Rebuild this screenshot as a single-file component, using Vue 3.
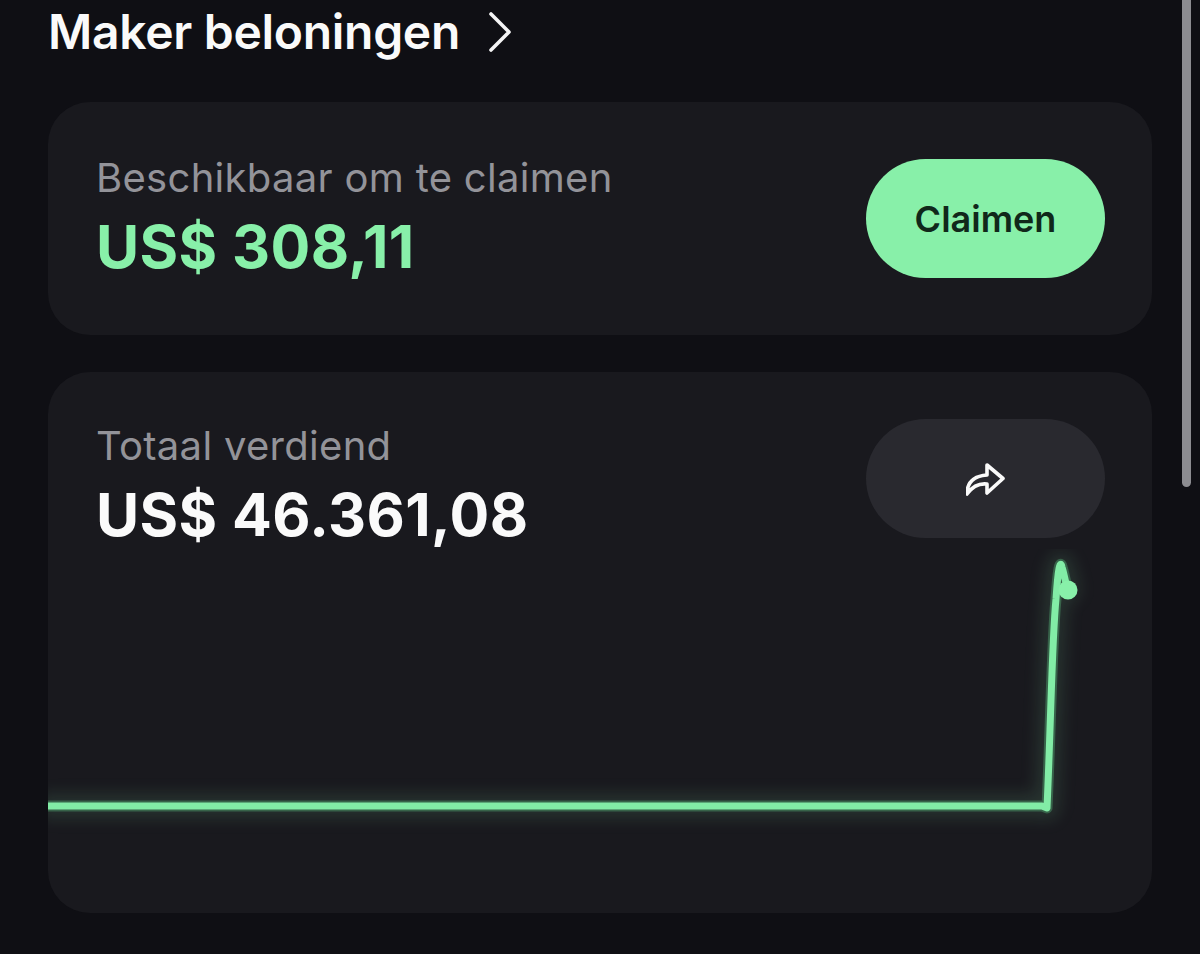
<script setup>
const linePath = 'M0 257 L994 257 L999 259 C1003 170 1004 90 1008 50 C1010 20 1012 10 1014 18 C1016 24 1017 32 1020 41'
</script>

<template>
  <main class="page">
    <header class="title-row">
      <h1 class="title">Maker beloningen</h1>
      <svg class="chevron" viewBox="0 0 24 40" aria-hidden="true">
        <path d="M3 2 L21 20 L3 38" />
      </svg>
    </header>

    <section class="card claim-card">
      <div class="stat">
        <p class="label">Beschikbaar om te claimen</p>
        <p class="amount green">US$ 308,11</p>
      </div>
      <button class="pill claim" type="button">Claimen</button>
    </section>

    <section class="card earned-card">
      <div class="earned-head">
        <div class="stat">
          <p class="label">Totaal verdiend</p>
          <p class="amount">US$ 46.361,08</p>
        </div>
        <button class="pill share" type="button" aria-label="Delen">
          <svg class="share-icon" viewBox="0 0 40 34" aria-hidden="true">
            <path d="M1 32 C1 20 8 14 21 13 L21 3 L37 16.5 L21 31 L21 22 C12 21 6 25 1 32 Z" />
          </svg>
        </button>
      </div>
      <svg class="chart" viewBox="0 0 1104 290" aria-hidden="true">
        <path class="glow" :d="linePath" />
        <path class="halo" :d="linePath" />
        <path class="line" :d="linePath" />
        <circle class="dot" cx="1020" cy="41" r="9.5" />
      </svg>
    </section>

    <div class="scrollbar"></div>
  </main>
</template>

<style>
html, body { margin: 0; background: #0f0f14; }
</style>

<style scoped>
.page {
  position: relative;
  box-sizing: border-box;
  width: 1200px;
  height: 954px;
  overflow: hidden;
  padding: 0 48px;
  background: #0f0f14;
  font-family: Inter, "Liberation Sans", sans-serif;
  color: #fafafa;
}
.title-row {
  display: flex;
  align-items: center;
  gap: 28px;
  height: 64px;
  margin-bottom: 38px;
}
.title {
  margin: 0;
  font-size: 48px;
  line-height: 64px;
  font-weight: 600;
  letter-spacing: -0.3px;
}
.chevron {
  width: 24px;
  height: 40px;
  flex: none;
}
.chevron path {
  fill: none;
  stroke: #f4f4f5;
  stroke-width: 3.6;
  stroke-linecap: round;
  stroke-linejoin: round;
}
.card {
  background: #19191e;
  border-radius: 42px;
}
.claim-card {
  display: flex;
  align-items: flex-start;
  justify-content: space-between;
  height: 233px;
  padding: 51px 47px 0 48px;
  box-sizing: border-box;
  margin-bottom: 37px;
}
.claim-card .pill { margin-top: 6px; }
.label {
  margin: 0;
  font-size: 40px;
  line-height: 50px;
  letter-spacing: 0.3px;
  color: #939399;
}
.amount {
  margin: 10px 0 0;
  font-size: 59px;
  line-height: 68px;
  font-weight: 700;
  letter-spacing: 0.4px;
}
.green { color: #88f0a9; }
.pill {
  width: 239px;
  height: 119px;
  border: 0;
  border-radius: 60px;
  padding: 0;
  font: inherit;
  display: flex;
  align-items: center;
  justify-content: center;
}
.claim {
  background: #88f0a9;
  color: #10281a;
  font-size: 36px;
  font-weight: 600;
}
.share { background: #29292f; }
.share-icon {
  width: 40px;
  height: 34px;
}
.share-icon path {
  fill: none;
  stroke: #fafafa;
  stroke-width: 3.6;
  stroke-linejoin: round;
  stroke-linecap: round;
}
.earned-card {
  height: 541px;
  overflow: hidden;
}
.earned-head {
  display: flex;
  justify-content: space-between;
  align-items: flex-start;
  padding: 47px 47px 0 48px;
}
.earned-head .stat { padding-top: 2px; }
.chart {
  display: block;
  width: 1104px;
  height: 290px;
}
.chart path { fill: none; stroke-linejoin: round; stroke-linecap: round; }
.glow {
  stroke: #88f0a9;
  stroke-opacity: 0.12;
  stroke-width: 24;
  filter: blur(8px);
}
.halo {
  stroke: #4fa56f;
  stroke-opacity: 0.45;
  stroke-width: 11;
}
.line {
  stroke: #82eca6;
  stroke-width: 7;
}
.dot { fill: #88f0a9; }
.scrollbar {
  position: absolute;
  top: 0;
  left: 1182px;
  width: 9px;
  height: 487px;
  border-radius: 0 0 5px 5px;
  background: #8c8c91;
}
</style>
